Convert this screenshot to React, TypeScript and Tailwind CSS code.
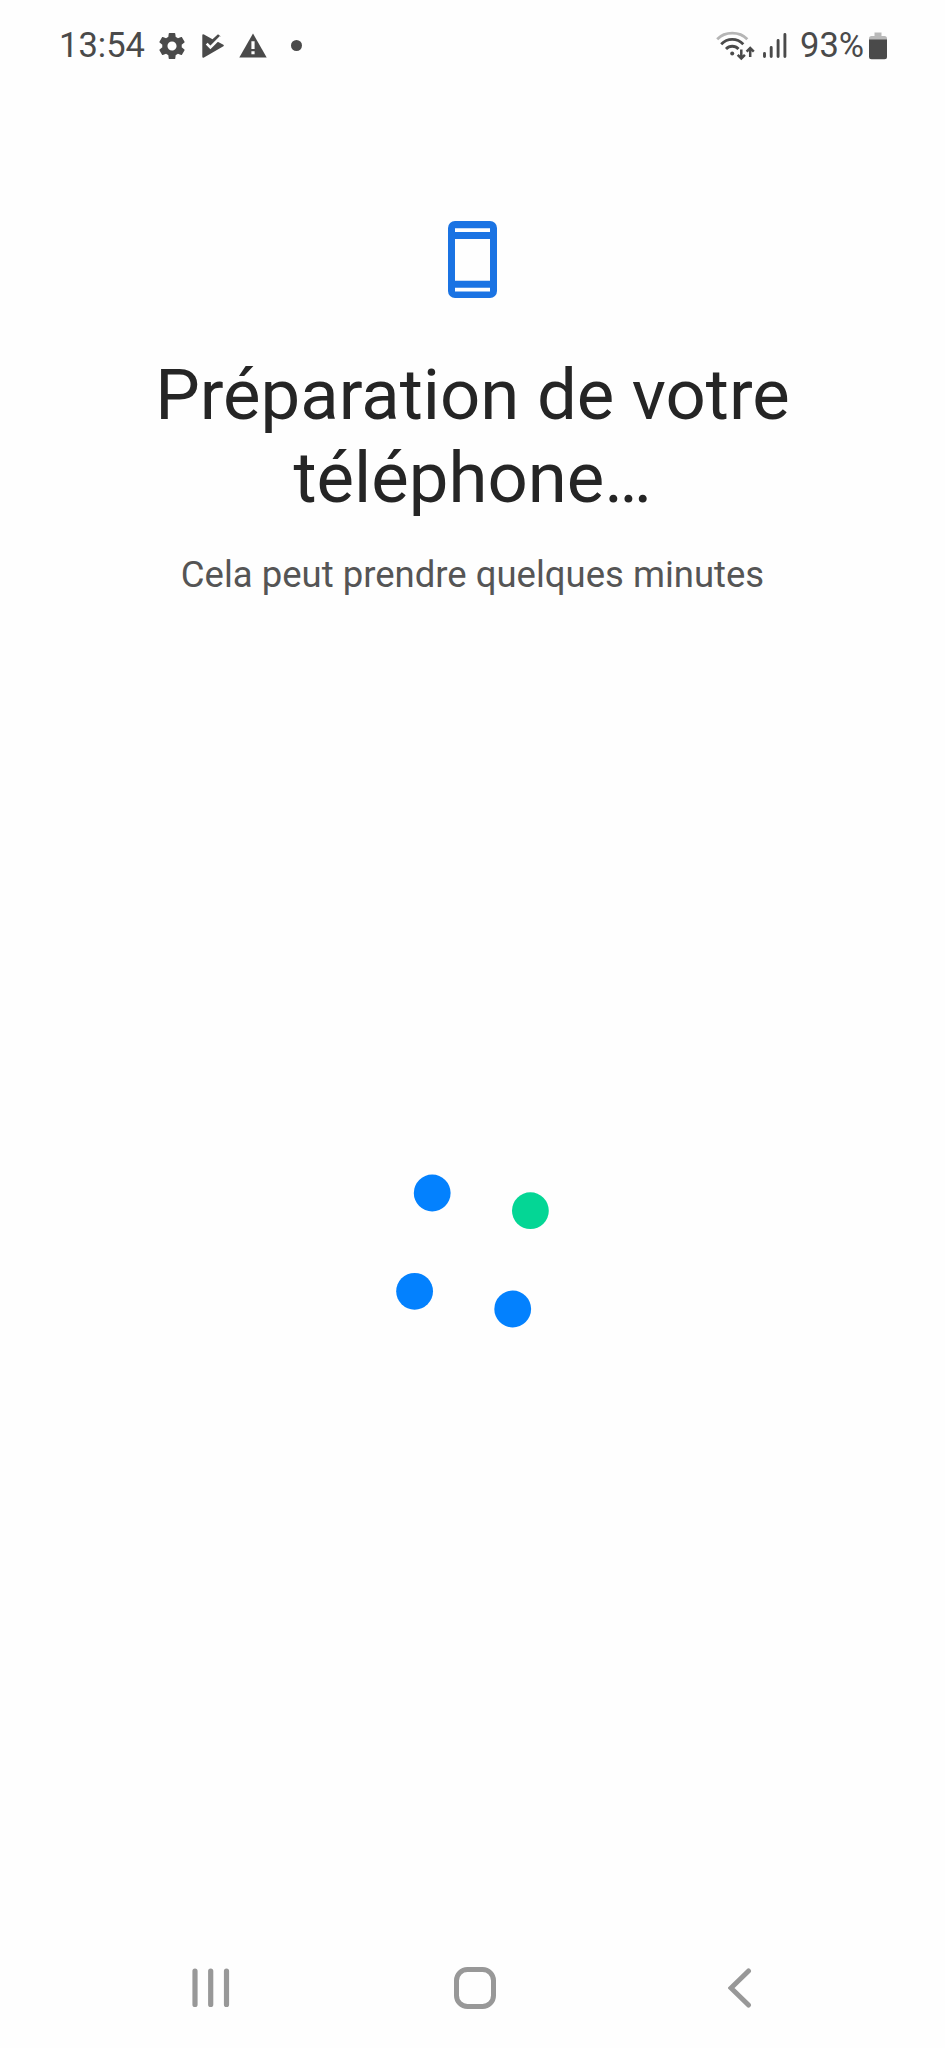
const dots = [
  { cx: 39.2, cy: 23, color: "#0381fe" },
  { cx: 137.4, cy: 40.7, color: "#04d695" },
  { cx: 21.6, cy: 121.3, color: "#0381fe" },
  { cx: 119.7, cy: 139, color: "#0381fe" },
];

function GearIcon() {
  return (
    <svg className="w-[26px] h-[26px]" viewBox="2 2 20 20" fill="currentColor">
      <path d="M19.43 12.98c.04-.32.07-.64.07-.98s-.03-.66-.07-.98l2.11-1.65c.19-.15.24-.42.12-.64l-2-3.46c-.12-.22-.39-.3-.61-.22l-2.49 1c-.52-.4-1.08-.73-1.69-.98l-.38-2.65C14.46 2.18 14.25 2 14 2h-4c-.25 0-.46.18-.49.42l-.38 2.65c-.61.25-1.17.59-1.69.98l-2.49-1c-.23-.09-.49 0-.61.22l-2 3.46c-.13.22-.07.49.12.64l2.11 1.65c-.04.32-.07.65-.07.98s.03.66.07.98l-2.11 1.65c-.19.15-.24.42-.12.64l2 3.46c.12.22.39.3.61.22l2.49-1c.52.4 1.08.73 1.69.98l.38 2.65c.03.24.24.42.49.42h4c.25 0 .46-.18.49-.42l.38-2.65c.61-.25 1.17-.59 1.69-.98l2.49 1c.23.09.49 0 .61-.22l2-3.46c.12-.22.07-.49-.12-.64l-2.11-1.65zM12 15.5c-1.93 0-3.5-1.57-3.5-3.5s1.57-3.5 3.5-3.5 3.5 1.57 3.5 3.5-1.57 3.5-3.5 3.5z" />
    </svg>
  );
}

function PlayCheckIcon() {
  return (
    <svg className="w-[22px] h-[26px]" viewBox="0 0 22 26" fill="currentColor">
      <path d="M0.300 2.500Q.300 .800 2 1.600L10.500 6.200L16 1.200L18.600 3.200L14.800 8.200L21.400 11.700Q22.300 12.500 21.400 13.300L2 24.500Q.300 25.200 .300 23.500Z" />
      <path d="M4.700 10.700L8.400 14.400L18.800 4" fill="none" stroke="#fefefe" strokeWidth="2.600" />
    </svg>
  );
}

function WarningIcon() {
  return (
    <svg className="w-[28px] h-[25px]" viewBox="0 0 28 25">
      <path d="M14 .5L27.700 24.500H.300Z" fill="currentColor" />
      <path d="M14 8.300V16M14 18.200V21.300" stroke="#fefefe" strokeWidth="3.200" />
    </svg>
  );
}

function WifiIcon() {
  return (
    <svg className="w-[39px] h-[30px]" viewBox="0 0 39 30" fill="none" stroke="currentColor" strokeWidth="2.800">
      <path d="M1.200 8.200C9 .2 23.500 .2 31.300 8.200" stroke="#b5b5b5" />
      <path d="M5.200 13.200C11.500 6.800 21 6.800 27.300 13.200" />
      <path d="M10 18C13.500 14.300 19 14.300 22.500 18" />
      <circle cx="16.200" cy="22.600" r="2" fill="currentColor" stroke="none" />
      <path d="M25.300 18.500V27M21.700 23.800L25.300 27.400L28.900 23.800M34.200 26V17.200M30.600 20.700L34.200 17.100L37.800 20.700" strokeWidth="2.500" />
    </svg>
  );
}

function SignalIcon() {
  return (
    <svg className="w-[24px] h-[26px]" viewBox="0 0 24 26" stroke="currentColor" strokeWidth="2.900" strokeLinecap="round">
      <path d="M1.500 20.500V23.500M8.200 14.500V23.500M15.100 7.500V23.500M21.900 1.500V23.500" />
    </svg>
  );
}

function BatteryIcon() {
  return (
    <svg className="w-[18px] h-[28px]" viewBox="0 0 18 28">
      <path d="M5.500 .5H12.500V4H15.500Q18 4 18 6.500V10H0V6.500Q0 4 2.500 4H5.500Z" fill="#b9b9b9" />
      <path d="M0 7.500H18V24.700Q18 27.200 15.500 27.200H2.500Q0 27.200 0 24.700Z" fill="currentColor" />
    </svg>
  );
}

function StatusBar() {
  return (
    <header className="h-[91px] pl-[59px] pr-[58px] flex items-center justify-between text-[#4a4a4a]">
      <div className="flex items-center">
        <span className="w-[86px] text-[34.5px] leading-none whitespace-nowrap">13:54</span>
        <div className="ml-[14px] flex items-center">
          <GearIcon />
        </div>
        <div className="ml-[17px]">
          <PlayCheckIcon />
        </div>
        <div className="ml-[15px]">
          <WarningIcon />
        </div>
        <div className="ml-[24px] size-[11px] rounded-full bg-[#4a4a4a]" />
      </div>
      <div className="flex items-center">
        <WifiIcon />
        <div className="ml-[8px]">
          <SignalIcon />
        </div>
        <span className="ml-[13px] w-[64px] text-[34.5px] leading-none whitespace-nowrap">93%</span>
        <div className="ml-[5px]">
          <BatteryIcon />
        </div>
      </div>
    </header>
  );
}

function PhoneIcon() {
  return (
    <svg className="w-[49px] h-[77px]" viewBox="0 0 49 77">
      <rect width="49" height="77" rx="7" fill="#1a73e3" />
      <path d="M7 7.300H42V11H7ZM7 18H42V59.700H7ZM7 66.800H42V70.500H7Z" fill="#fefefe" />
    </svg>
  );
}

function Spinner() {
  return (
    <svg className="w-[159px] h-[162px]" viewBox="0 0 159 162">
      {dots.map((dot, i) => (
        <circle cx={dot.cx} cy={dot.cy} r="18.400" fill={dot.color} key={i} />
      ))}
    </svg>
  );
}

function NavBar() {
  return (
    <nav className="h-[121px] pl-[192px] flex items-center text-[#989898]">
      <svg className="w-[38px] h-[40px]" viewBox="0 0 38 40" stroke="currentColor" strokeWidth="5.200" strokeLinecap="round">
        <path d="M3 3V36.500M18.700 3V36.500M34.500 3V36.500" />
      </svg>
      <svg className="ml-[224px] w-[42px] h-[42px]" viewBox="0 0 42 42" fill="none" stroke="currentColor" strokeWidth="5">
        <rect x="2.500" y="2.500" width="37" height="37" rx="11" />
      </svg>
      <svg className="ml-[232px] w-[24px] h-[40px]" viewBox="0 0 24 40" fill="none" stroke="currentColor" strokeWidth="5" strokeLinecap="round">
        <path d="M20.500 3L3 20L20.500 37" />
      </svg>
    </nav>
  );
}

export default function App() {
  return (
    <div className="w-full h-[2048px] flex flex-col bg-[#fefefe] font-['Roboto',sans-serif]">
      <StatusBar />
      <main className="flex-1 flex flex-col items-center text-center">
        <div className="mt-[130px]">
          <PhoneIcon />
        </div>
        <h1 className="mt-[55px] w-[700px] text-[70.7px] leading-[83px] text-[#252525]">
          Préparation de votre téléphone…
        </h1>
        <p className="mt-[34px] text-[36.5px] leading-[44px] text-[#555555]">
          Cela peut prendre quelques minutes
        </p>
        <div className="mt-[573px]">
          <Spinner />
        </div>
      </main>
      <NavBar />
    </div>
  );
}
